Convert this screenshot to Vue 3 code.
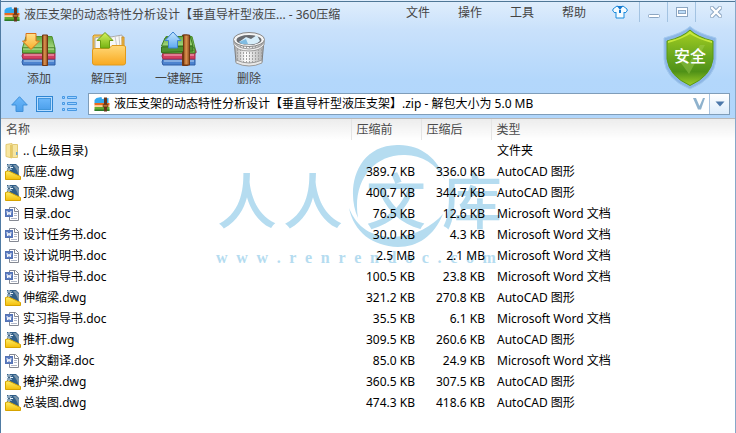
<template>
  <div class="window">
    <!-- 标题栏 -->
    <header class="titlebar">
      <svg class="zip-icon" viewBox="0 0 32 32">
        <use href="#zip-shape" />
      </svg>
      <h1 class="title">{{ shortTitle }} - 360压缩</h1>
      <nav class="menu">
        <button v-for="item in menus" :key="item" type="button" class="menu-btn">{{ item }}</button>
      </nav>
      <button type="button" class="skin-btn" aria-label="皮肤">
        <svg width="16" height="14" viewBox="0 0 16 14">
          <path d="M5 1 L1 4 L0.8 6 L3 8 L4 7 V13 H12 V7 L13 8 L15.2 6 L15 4 L11 1 Q8 4 5 1Z" fill="#f4fbff" stroke="#1b8bdc" />
          <path d="M5 1 H11 L8 5Z M7 5 H9 V8 H7Z" fill="#1478cf" />
        </svg>
      </button>
      <button type="button" class="win-btn" aria-label="最小化">
        <svg width="12" height="12" viewBox="0 0 12 12">
          <rect x="0.5" y="8.5" width="11" height="3" rx="1" fill="#fff" stroke="#8ca6c2" />
        </svg>
      </button>
      <button type="button" class="win-btn" aria-label="最大化">
        <svg width="12" height="12" viewBox="0 0 12 12">
          <rect x="0.5" y="1.5" width="11" height="9" fill="#fff" stroke="#8ca6c2" />
          <rect x="2.5" y="4.5" width="7" height="3" fill="#bcdcf8" stroke="#8ca6c2" />
        </svg>
      </button>
      <button type="button" class="win-btn close" aria-label="关闭">
        <svg width="12" height="12" viewBox="0 0 12 12">
          <path d="M2 2 L10 10 M10 2 L2 10" stroke="#8ca6c2" stroke-width="4.4" stroke-linecap="square" />
          <path d="M2 2 L10 10 M10 2 L2 10" stroke="#fff" stroke-width="2.4" stroke-linecap="square" />
        </svg>
      </button>
    </header>

    <!-- 工具栏 -->
    <div class="toolbar">
      <button type="button" class="tool">
        <svg width="36" height="36" viewBox="0 0 36 36">
          <use href="#books-shape" />
          <path d="M5 2.500 H15 V10 H18.500 L10 18.500 L1.500 10 H5Z" fill="url(#orange)" stroke="#d9731a" />
        </svg>
        <span>添加</span>
      </button>
      <button type="button" class="tool">
        <svg width="36" height="36" viewBox="0 0 36 36">
          <path d="M3 4 H12 L14 6 V18 H2 V5Z" fill="#f0c65a" stroke="#cf9228" />
          <path d="M4 7 L17 4 L20 6 L31 4 L32 18 H4Z" fill="#f7f7f5" stroke="#a9a9a9" />
          <path d="M24 5 L26 17 M28 5 L29 17" stroke="#c9c9c9" />
          <path d="M31 6 H33 V18 H31Z" fill="#eebc49" stroke="#c98f2a" />
          <path d="M1.500 19 Q1.500 17.500 3.500 17.500 H18 L21 14.500 H32 Q34.500 14.500 34.500 16 V32 Q34.500 34 32 34 H4 Q1.500 34 1.500 32Z" fill="url(#folder)" stroke="#e09a1c" />
          <path d="M14 1.500 L22 9.500 H18.500 V17 H9.500 V9.500 H6Z" fill="url(#lime)" stroke="#6c9d12" />
        </svg>
        <span>解压到</span>
      </button>
      <button type="button" class="tool">
        <svg width="36" height="36" viewBox="0 0 36 36">
          <path d="M29 8 L35 20 V22 H29Z" fill="#d6486d" stroke="#a52a4a" />
          <use href="#books-shape" />
          <path d="M4 7 L29 4.500 L32 15 H0.500Z" fill="url(#green)" stroke="#3c7d22" />
          <path d="M0.500 16 L32 15 V20 L0.500 21.500Z" fill="#4f9132" stroke="#35701d" />
          <path d="M22.500 4 H28.500 V34 H22.500Z" fill="url(#belt)" stroke="#713712" />
          <path d="M12 1 L20 9.500 H16.500 V17 H7.500 V9.500 H4Z" fill="url(#blueArrow)" stroke="#3c82d0" />
        </svg>
        <span>一键解压</span>
      </button>
      <button type="button" class="tool">
        <svg width="36" height="36" viewBox="0 0 36 36">
          <path d="M3 9 L5 31 Q18 38 31 31 L33 9Z" fill="url(#metal)" stroke="#7e7e7e" />
          <path d="M3 9 L5 31 Q18 38 31 31 L33 9Z" fill="url(#mesh)" />
          <path d="M5 29 Q18 35 31 29 V32 Q18 38 5 32Z" fill="#e8e8e8" stroke="#9b9b9b" />
          <ellipse cx="18" cy="8.500" rx="15.500" ry="7" fill="#f4f4f4" stroke="#878787" />
          <ellipse cx="18" cy="9" rx="12.500" ry="5" fill="#686b70" />
          <path d="M8 11 L15 6 L20 8 L26 4 L29 10 Q24 15 13 13Z" fill="#d6edfa" />
          <path d="M8 11 L15 8 L17 13 L11 13Z" fill="#80bce2" />
          <path d="M3 10 Q4 17 18 18 Q32 17 33 10 V14 Q29 20 18 20 Q6 20 3 14Z" fill="#eeeeee" stroke="#9b9b9b" />
        </svg>
        <span>删除</span>
      </button>
      <div class="shield">
        <svg width="54" height="64" viewBox="0 0 54 64">
          <path d="M27 0.500 Q34 7 53 12 V33 Q52 53 27 63 Q2 53 1 33 V12 Q20 7 27 0.500Z" fill="#8cb6e5" stroke="#a2c9ef" />
          <path d="M27 4 Q34 11 50 15 V33 Q48 50 27 59.500 Q6 50 4 33 V15 Q20 11 27 4Z" fill="url(#shieldFill)" stroke="#5a9a12" />
          <path d="M27 5 Q34 12 49 15 V17 Q35 13 27 8 Q19 13 5 17 V15 Q20 12 27 5Z" fill="#c7e83c" />
          <path d="M15 33 L21 29 L26 37 L37 19 L42 19 L26 48Z" fill="#a7d35a" opacity="0.4" />
        </svg>
        <span class="shield-text">安全</span>
      </div>
    </div>

    <!-- 地址栏 -->
    <div class="address-row">
      <button type="button" class="nav-btn" aria-label="向上">
        <svg width="17" height="16" viewBox="0 0 17 16">
          <path d="M8.500 0.700 L16.300 9 H12 V15.500 H5 V9 H0.700Z" fill="url(#navFill)" stroke="#3f90da" />
        </svg>
      </button>
      <button type="button" class="nav-btn" aria-label="视图">
        <svg width="17" height="16" viewBox="0 0 17 16">
          <rect x="0.500" y="0.500" width="16" height="15" fill="#b7dcff" stroke="#2f86d3" />
          <rect x="2.500" y="2.500" width="12" height="11" fill="url(#navFill)" stroke="#4296dc" />
        </svg>
      </button>
      <button type="button" class="nav-btn" aria-label="列表">
        <svg width="17" height="16" viewBox="0 0 17 16">
          <path d="M1.500 0.500h2v2h-2z M1.500 6.500h2v2h-2z M1.500 12.500h2v2h-2z M6.500 0.500h9v2h-9z M6.500 6.500h9v2h-9z M6.500 12.500h9v2h-9z" fill="#9ed0ff" stroke="#4798e2" />
        </svg>
      </button>
      <div class="address">
        <svg class="zip-icon" viewBox="0 0 32 32">
          <use href="#zip-shape" />
        </svg>
        <input v-model="address" class="address-input" type="text" aria-label="地址" spellcheck="false">
        <svg class="vee" width="12" height="12" viewBox="0 0 12 12">
          <path d="M0 0 H3 L6.500 8 L10 0 H12 L8 11.500 H5Z" fill="#8fb2cd" />
        </svg>
        <button type="button" class="drop-btn" aria-label="展开">
          <svg width="10" height="6" viewBox="0 0 10 6">
            <path d="M0.500 0.500 H9.500 L5 5.500Z" fill="#4c78aa" />
          </svg>
        </button>
      </div>
    </div>

    <!-- 文件列表 -->
    <main class="list">
      <div class="watermark" aria-hidden="true">
        <svg class="ring" width="98" height="104" viewBox="0 0 98 104">
          <path d="M10 74 C-2 48 6 2 49 1 C72 0 90 14 97 36 C88 20 74 11 57 11 C25 10 4 38 10 74Z" fill="#b5dcf0" />
          <path d="M1 64 C9 84 24 93 45 93 C68 92 84 82 95 70 C86 92 70 103 50 103 C24 102 6 88 1 64Z" fill="#b5dcf0" />
        </svg>
        <div class="mark-name"><span v-for="(c, i) in '人人文库'" :key="i">{{ c }}</span></div>
        <div class="mark-url"><span v-for="(c, i) in 'www.renrendoc.com'" :key="i">{{ c }}</span></div>
      </div>
      <table class="files">
        <thead>
          <tr>
            <th class="col-name">名称</th>
            <th class="col-size">压缩前</th>
            <th class="col-size">压缩后</th>
            <th>类型</th>
          </tr>
        </thead>
        <tbody>
          <tr v-for="file in files" :key="file.name">
            <td>
              <div class="name-cell">
                <svg v-if="file.kind === 'dir'" width="16" height="16" viewBox="0 0 16 16">
                  <path d="M1 1.500 L7 0.500 V15 L1 13.500Z" fill="#f8e6a0" stroke="#e3ca74" />
                  <path d="M5 2 H8 V15 H5Z" fill="#e5c967" />
                  <path d="M7.500 1.500 H12.500 V14.500 H7.500Z" fill="#f6e5a0" stroke="#e3ca74" />
                  <path d="M11 9 h1.500 v3 h-1.500z" fill="#6ba6d5" />
                </svg>
                <svg v-else-if="file.kind === 'dwg'" width="16" height="16" viewBox="0 0 16 16">
                  <path d="M2 0 H11 L14 3 V13 H2Z" fill="#315f88" />
                  <path d="M8 1 H11 L14 4 V12 Q12 5 8 1Z" fill="#7895ac" />
                  <path d="M0.500 7.500 Q3 6 6 8 L15.500 12.500 V15.500 H0.500Z" fill="url(#gold)" stroke="#d6a300" />
                  <path d="M4 0 V7 M0 3.500 H8 M1.500 1 L6.500 6 M6.500 1 L1.500 6" stroke="#eef6fc" />
                  <path d="M3 2.500 H5 V4.500 H3Z" fill="#426783" />
                </svg>
                <svg v-else width="16" height="16" viewBox="0 0 16 16">
                  <path d="M4.500 1.500 H10.500 L13.500 4.500 V14.500 H4.500Z" fill="#fff" stroke="#858993" />
                  <path d="M9.500 2 V5.500 H13" fill="none" stroke="#858993" />
                  <path d="M9 7.500 H12 M9 9.500 H12 M6 12.500 H12" stroke="#b2b9c9" />
                  <rect x="0.500" y="3.500" width="7" height="7" fill="#5a7bc0" stroke="#5473b5" />
                  <path d="M2 5 L2.700 9 L4 6 L5.300 9 L6 5" fill="none" stroke="#fff" />
                </svg>
                <span>{{ file.name }}</span>
              </div>
            </td>
            <td class="size">{{ file.before }}</td>
            <td class="size">{{ file.after }}</td>
            <td class="type">{{ typeNames[file.kind] }}</td>
          </tr>
        </tbody>
      </table>
    </main>

    <!-- 共用图形 -->
    <svg class="defs" width="0" height="0" aria-hidden="true">
      <defs>
        <linearGradient id="orange" x2="0" y2="1"><stop stop-color="#ffe18a" /><stop offset="1" stop-color="#f9ae2b" /></linearGradient>
        <linearGradient id="folder" x2="0" y2="1"><stop stop-color="#ffd878" /><stop offset="1" stop-color="#f9a91f" /></linearGradient>
        <linearGradient id="lime" x2="0" y2="1"><stop stop-color="#d7f25c" /><stop offset="1" stop-color="#75b313" /></linearGradient>
        <linearGradient id="green" x2="0" y2="1"><stop stop-color="#5fa83e" /><stop offset="1" stop-color="#a5d77f" /></linearGradient>
        <linearGradient id="belt"><stop stop-color="#8c4a1c" /><stop offset="0.45" stop-color="#dd9450" /><stop offset="1" stop-color="#8c4a1c" /></linearGradient>
        <linearGradient id="blueArrow" x2="0" y2="1"><stop stop-color="#c5e6ff" /><stop offset="1" stop-color="#5ea9f1" /></linearGradient>
        <linearGradient id="metal"><stop stop-color="#aaa" /><stop offset="0.4" stop-color="#fff" /><stop offset="1" stop-color="#aaa" /></linearGradient>
        <linearGradient id="shieldFill" x2="0" y2="1"><stop stop-color="#a6cf20" /><stop offset="0.5" stop-color="#65a41e" /><stop offset="0.75" stop-color="#4f9117" /><stop offset="1" stop-color="#9fce28" /></linearGradient>
        <linearGradient id="navFill" x2="0" y2="1"><stop stop-color="#6bb7fb" /><stop offset="1" stop-color="#4da0eb" /></linearGradient>
        <linearGradient id="gold" x2="0" y2="1"><stop stop-color="#fff06b" /><stop offset="1" stop-color="#f4bd09" /></linearGradient>
        <pattern id="mesh" width="3" height="3" patternUnits="userSpaceOnUse"><rect width="1" height="2" fill="#a2a2a2" /></pattern>
        <symbol id="books-shape" viewBox="0 0 36 36" overflow="visible">
          <path d="M2 28 H34 V34 H2 Q0 31 2 28Z" fill="#4d83cf" stroke="#2e5ca5" />
          <path d="M3 30 H33" stroke="#b9d5f4" />
          <path d="M2 22 H34 V28 H2 Q0 25 2 22Z" fill="#d13e62" stroke="#a52a4a" />
          <path d="M3 24 H33" stroke="#f3b7c5" />
          <path d="M5 5.500 H31 L34 17 H1.500Z" fill="url(#green)" stroke="#52902f" />
          <path d="M1.500 17 H34 V22 H1.500Z" fill="#6fb548" stroke="#3f7d27" />
          <path d="M2 18 H33" stroke="#c8eba9" />
          <path d="M21.500 4 H26.500 V34.500 H21.500Z" fill="url(#belt)" stroke="#713712" />
        </symbol>
        <symbol id="zip-shape" viewBox="0 0 32 32">
          <path d="M5 4 L15 2 L16 6 L29 4 V15 H1V8Z" fill="#35a9ee" />
          <path d="M1 14 H31 V19 H1Z" fill="#eb6b1e" />
          <path d="M1 19 H31 V22 H1Z" fill="#ffd49a" />
          <path d="M1 22 H31 V29 H1Z" fill="#62ab30" />
          <path d="M1 27 H31 V30 H1Z" fill="#2d7929" />
          <path d="M20 3 H26 V31 H20Z" fill="#66361c" />
          <path d="M18 17 H28 V22 H18Z" fill="#b87333" stroke="#4c2813" />
        </symbol>
      </defs>
    </svg>
  </div>
</template>

<script setup>
import { ref } from 'vue'

const shortTitle = '液压支架的动态特性分析设计【垂直导杆型液压...'
const address = ref('液压支架的动态特性分析设计【垂直导杆型液压支架】.zip - 解包大小为 5.0 MB')

const menus = ['文件', '操作', '工具', '帮助']

const typeNames = {
  dir: '文件夹',
  dwg: 'AutoCAD 图形',
  doc: 'Microsoft Word 文档',
}

const files = ref([
  { name: '.. (上级目录)', kind: 'dir', before: '', after: '' },
  { name: '底座.dwg', kind: 'dwg', before: '389.7 KB', after: '336.0 KB' },
  { name: '顶梁.dwg', kind: 'dwg', before: '400.7 KB', after: '344.7 KB' },
  { name: '目录.doc', kind: 'doc', before: '76.5 KB', after: '12.6 KB' },
  { name: '设计任务书.doc', kind: 'doc', before: '30.0 KB', after: '4.3 KB' },
  { name: '设计说明书.doc', kind: 'doc', before: '2.5 MB', after: '2.1 MB' },
  { name: '设计指导书.doc', kind: 'doc', before: '100.5 KB', after: '23.8 KB' },
  { name: '伸缩梁.dwg', kind: 'dwg', before: '321.2 KB', after: '270.8 KB' },
  { name: '实习指导书.doc', kind: 'doc', before: '35.5 KB', after: '6.1 KB' },
  { name: '推杆.dwg', kind: 'dwg', before: '309.5 KB', after: '260.6 KB' },
  { name: '外文翻译.doc', kind: 'doc', before: '85.0 KB', after: '24.9 KB' },
  { name: '掩护梁.dwg', kind: 'dwg', before: '360.5 KB', after: '307.5 KB' },
  { name: '总装图.dwg', kind: 'dwg', before: '474.3 KB', after: '418.6 KB' },
])
</script>

<style>
body { background: #fff; }
</style>

<style scoped>
* { box-sizing: border-box; }

.window {
  min-height: 100vh;
  padding-top: 1px;
  border-left: 1px solid #4f7ba3;
  border-right: 1px solid #86a8c8;
  font: 12px/20px "Noto Sans", "Noto Sans CJK SC", sans-serif;
  color: #000;
  background: linear-gradient(#e0eefc 0, #c9e1fb 30px, #b3d7fb 80px, #b1d6fb 119px, #fff 119px);
}

button {
  padding: 0;
  border: 0;
  background: none;
  font: inherit;
  color: #444;
  cursor: pointer;
}

svg { display: block; flex: none; }
.defs { position: absolute; }

/* 标题栏 */
.titlebar {
  display: flex;
  height: 25px;
  padding-left: 3px;
  border-top: 1px solid #4f7796;
}
.zip-icon { width: 16px; height: 16px; align-self: center; }
.title {
  flex: 1;
  min-width: 0;
  margin: 0;
  padding: 3px 0 0 4px;
  font-size: 12px;
  font-weight: 400;
  color: #444;
  white-space: nowrap;
  overflow: hidden;
}
.menu { display: flex; }
.menu-btn { width: 52px; height: 22px; }
.skin-btn { display: flex; justify-content: center; align-items: center; width: 39px; height: 20px; }
.win-btn {
  display: flex;
  justify-content: center;
  align-items: center;
  width: 28px;
  height: 20px;
  border-left: 1px solid #a3c3e2;
}
.win-btn.close { width: 40px; }

/* 工具栏 */
.toolbar { display: flex; height: 64px; padding: 0 18px 0 3px; }
.tool {
  display: flex;
  flex-direction: column;
  align-items: center;
  gap: 2px;
  width: 70px;
  padding-top: 5px;
}
.shield { position: relative; margin-left: auto; }
.shield-text {
  position: absolute;
  inset: 20px 0 auto;
  text-align: center;
  font-size: 16px;
  font-weight: 500;
  color: #fff;
}

/* 地址栏 */
.address-row {
  display: flex;
  align-items: center;
  gap: 8px;
  height: 28px;
  padding: 0 5px 0 10px;
}
.address {
  display: flex;
  align-items: center;
  flex: 1;
  height: 22px;
  margin-left: 2px;
  padding-left: 5px;
  border: 1px solid #7f9db9;
  background: #fff;
}
.address-input {
  flex: 1;
  min-width: 0;
  height: 20px;
  padding: 0 0 0 4px;
  border: 0;
  outline: 0;
  font: inherit;
  color: #000;
  background: none;
}
.vee { margin-right: 4px; }
.drop-btn {
  display: flex;
  justify-content: center;
  align-items: center;
  width: 20px;
  height: 20px;
  border-left: 1px solid #a9c4e0;
  background: linear-gradient(#fff, #dcecfb);
}

/* 文件列表 */
.list { position: relative; border-top: 1px solid #b9b9b9; }
.files {
  position: relative;
  width: 100%;
  table-layout: fixed;
  border-collapse: collapse;
}
.files th {
  height: 21px;
  padding: 0 0 0 5px;
  font-weight: 400;
  text-align: left;
  color: #4a4a4a;
  background: linear-gradient(#ececec, #fff);
}
.files th + th { border-left: 1px solid #e4e4e4; }
.col-name { width: 350px; }
.col-size { width: 70px; }
.files td { height: 21px; padding: 0; white-space: nowrap; }
.name-cell { display: flex; align-items: center; gap: 2px; padding-left: 4px; }
.files .size { padding-right: 6px; text-align: right; }
.files .type { padding-left: 6px; }

/* 水印 */
.watermark {
  position: absolute;
  top: 25px;
  left: 213px;
  width: 284px;
  color: #b5dcf0;
}
.ring { position: absolute; top: 0; left: 134px; }
.mark-name {
  display: grid;
  grid-template-columns: 66px 66px 100px 52px;
  justify-items: center;
  padding-top: 24px;
  font: 500 60px/60px "Noto Sans CJK SC", sans-serif;
}
.mark-url {
  display: flex;
  justify-content: space-between;
  padding: 20px 2px 0;
  font: 700 16px/20px "Liberation Serif", serif;
}
</style>
